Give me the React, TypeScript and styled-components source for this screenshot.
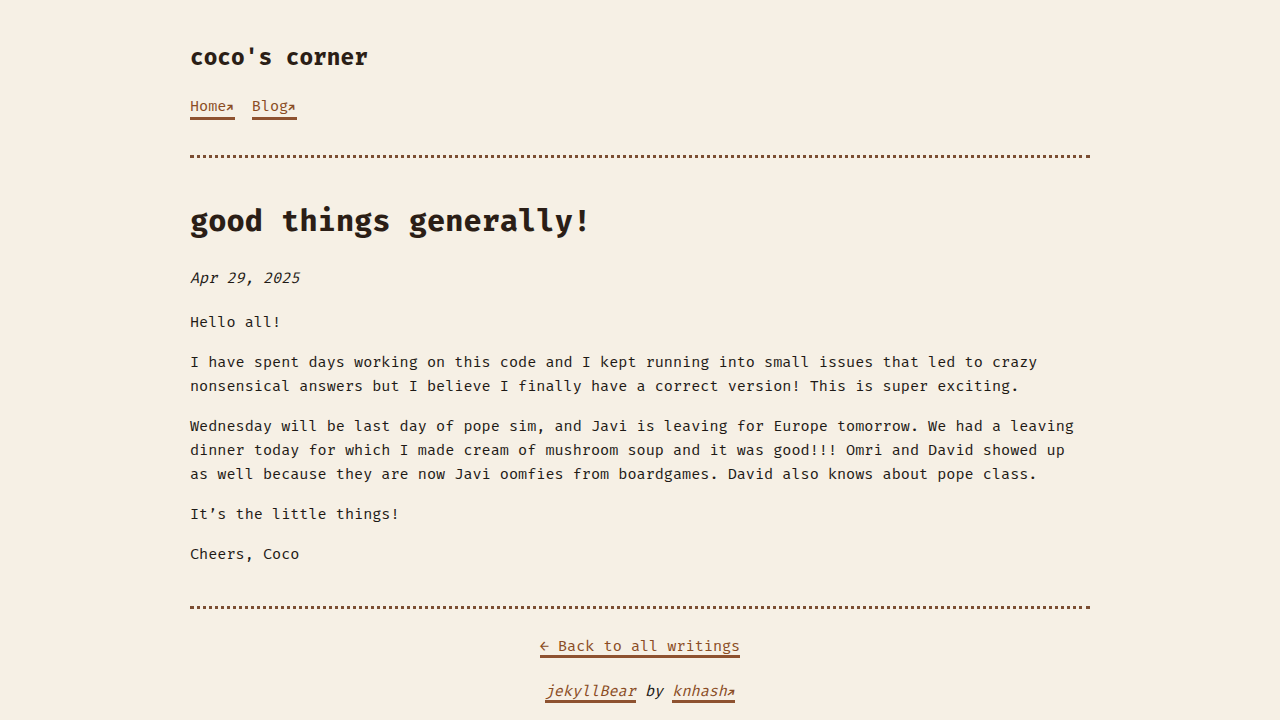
import React from "react";
import styled, { createGlobalStyle } from "styled-components";

const Global = createGlobalStyle`
  html, body { margin: 0; padding: 0; background: #f6f0e5; }
  body {
    font-family: "Fira Mono", "DejaVu Sans Mono", "Liberation Mono", monospace;
    color: #1e1a16;
    font-size: 15.2px;
    line-height: 24px;
  }
`;

const Page = styled.div`
  width: 900px;
  margin: 0 auto;
  padding-top: 44px;
  padding-bottom: 30px;
`;

const SiteTitle = styled.div`
  font-size: 22.8px;
  line-height: 27px;
  font-weight: 700;
  color: #2b1e16;
`;

const Nav = styled.nav`
  display: flex;
  align-items: flex-start;
  gap: 17px;
  margin-top: 26px;
`;

const Link = styled.a<{ $italic?: boolean }>`
  color: #8a4c24;
  text-decoration: none;
  border-bottom: 3px solid #8e5230;
  font-style: ${(p) => (p.$italic ? "italic" : "normal")};
`;

const NavLink = styled(Link)`
  line-height: 18px;
`;

const Arrow = styled.span`
  font-size: 10.5px;
  font-weight: 700;
  margin-right: 2px;
`;

const Rule = styled.hr<{ $top: number }>`
  border: none;
  border-top: 3px dotted #7b4e33;
  height: 0;
  margin: ${(p) => p.$top}px 0 0;
`;

const PostTitle = styled.h1`
  font-size: 30.4px;
  line-height: 36px;
  font-weight: 700;
  color: #2b1e16;
  margin: 45px 0 0;
`;

const PostDate = styled.div`
  font-style: italic;
  margin-top: 27px;
`;

const Body = styled.div`
  margin-top: 20px;
  display: flex;
  flex-direction: column;
  gap: 16px;
`;

const Para = styled.p`
  margin: 0;
`;

const Footer = styled.footer`
  display: flex;
  flex-direction: column;
  align-items: center;
`;

const FooterRow = styled.div<{ $top: number; $italic?: boolean }>`
  margin-top: ${(p) => p.$top}px;
  font-style: ${(p) => (p.$italic ? "italic" : "normal")};
`;

export default function App() {
  return (
    <>
      <Global />
      <Page>
        <SiteTitle>coco's corner</SiteTitle>
        <Nav>
          <NavLink href="#">Home<Arrow>↗</Arrow></NavLink>
          <NavLink href="#">Blog<Arrow>↗</Arrow></NavLink>
        </Nav>
        <Rule $top={35} />
        <PostTitle>good things generally!</PostTitle>
        <PostDate>Apr 29, 2025</PostDate>
        <Body>
          <Para>Hello all!</Para>
          <Para>
            I have spent days working on this code and I kept running into small issues that led to crazy
            nonsensical answers but I believe I finally have a correct version! This is super exciting.
          </Para>
          <Para>
            Wednesday will be last day of pope sim, and Javi is leaving for Europe tomorrow. We had a leaving
            dinner today for which I made cream of mushroom soup and it was good!!! Omri and David showed up
            as well because they are now Javi oomfies from boardgames. David also knows about pope class.
          </Para>
          <Para>It’s the little things!</Para>
          <Para>Cheers, Coco</Para>
        </Body>
        <Rule $top={40} />
        <Footer>
          <FooterRow $top={25}>
            <Link href="#">← Back to all writings</Link>
          </FooterRow>
          <FooterRow $top={21} $italic>
            <Link href="#" $italic>jekyllBear</Link> by <Link href="#" $italic>knhash<Arrow>↗</Arrow></Link>
          </FooterRow>
        </Footer>
      </Page>
    </>
  );
}
